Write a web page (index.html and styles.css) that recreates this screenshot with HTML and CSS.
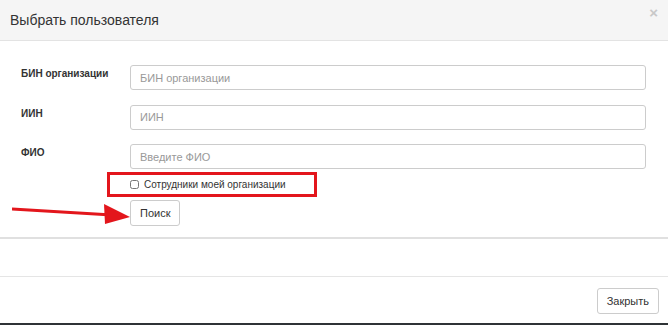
FILE: index.html
```html
<!DOCTYPE html>
<html lang="ru">
<head>
<meta charset="UTF-8">
<meta name="viewport" content="width=device-width, initial-scale=1.0">
<title>Выбрать пользователя</title>
<link rel="stylesheet" href="styles.css">
</head>
<body>
<div class="modal">
    <div class="modal-header">
        <h4 class="modal-title">Выбрать пользователя</h4>
        <button type="button" class="close">&times;</button>
    </div>

    <div class="modal-body">
        <form class="search-form">
            <label for="bin">БИН организации</label>
            <input type="text" id="bin" placeholder="БИН организации">

            <label for="iin">ИИН</label>
            <input type="text" id="iin" placeholder="ИИН">

            <label for="fio">ФИО</label>
            <input type="text" id="fio" placeholder="Введите ФИО">

            <div class="field-wide">
                <div class="check-row highlight">
                    <input type="checkbox" id="myOrg">
                    <label for="myOrg">Сотрудники моей организации</label>
                </div>
                <button type="button" class="btn">Поиск</button>
            </div>
        </form>

        <svg class="arrow" width="120" height="24" viewBox="0 0 120 24">
            <line x1="0" y1="5" x2="100" y2="11" stroke="#e3161c" stroke-width="3"/>
            <polygon points="92,0 118,13 93,20" fill="#e3161c"/>
        </svg>
    </div>

    <div class="results"></div>

    <div class="modal-footer">
        <button type="button" class="btn">Закрыть</button>
    </div>
</div>
</body>
</html>
```

FILE: styles.css
```css
body {
    margin: 0;
    font-family: "Liberation Sans", Arial, sans-serif;
    color: #333;
    background: #fff;
}
.modal {
    width: 668px;
    height: 325px;
    border-bottom: 2px solid #2f3336;
    box-sizing: border-box;
    display: flex;
    flex-direction: column;
}
.modal-header {
    height: 41px;
    background-color: #f5f5f5;
    border-bottom: 1px solid #e3e3e3;
    box-sizing: border-box;
    display: flex;
    align-items: center;
    justify-content: space-between;
    padding: 0 10px;
}
.modal-title {
    margin: 0;
    font-size: 14px;
    font-weight: normal;
    color: #333;
}
.close {
    align-self: flex-start;
    margin-top: 5px;
    margin-right: 0;
    padding: 0;
    border: none;
    background: none;
    color: #c8c8c8;
    font-size: 15px;
    font-weight: bold;
    line-height: 1;
}
.modal-body {
    position: relative;
    padding: 24px 22px 11px 21px;
    border-bottom: 2px solid #e0e0e0;
}
.search-form {
    display: grid;
    grid-template-columns: 109px 1fr;
    row-gap: 14.5px;
    align-items: start;
}
.search-form > label {
    font-size: 10px;
    font-weight: bold;
    color: #333;
    padding-top: 3px;
}
.search-form > input {
    height: 25px;
    box-sizing: border-box;
    border: 1px solid #ccc;
    border-radius: 3px;
    padding: 0 9px;
    font-family: inherit;
    font-size: 11px;
    color: #555;
    outline: none;
}
.search-form > input::placeholder {
    color: #999;
}
.field-wide {
    grid-column: 2;
    margin-top: -12px;
    display: flex;
    flex-direction: column;
    align-items: flex-start;
    gap: 3px;
}
.check-row {
    display: flex;
    align-items: center;
    gap: 5px;
    font-size: 10px;
    color: #333;
}
.check-row input {
    width: 9px;
    height: 9px;
    margin: 0;
}
.highlight {
    margin-left: -23px;
    width: 210px;
    height: 25px;
    box-sizing: border-box;
    border: 3px solid #e3161c;
    padding-left: 20px;
}
.btn {
    background: #fff;
    border: 1px solid #ccc;
    border-radius: 3px;
    font-family: inherit;
    font-size: 11px;
    color: #333;
    height: 26px;
    padding: 0 9px;
    cursor: pointer;
}
.arrow {
    position: absolute;
    left: 12px;
    top: 163px;
}
.results {
    height: 37px;
    border-bottom: 1px solid #e5e5e5;
}
.modal-footer {
    flex: 1;
    display: flex;
    justify-content: flex-end;
    align-items: flex-start;
    padding: 11px 9px 0 0;
}
```
